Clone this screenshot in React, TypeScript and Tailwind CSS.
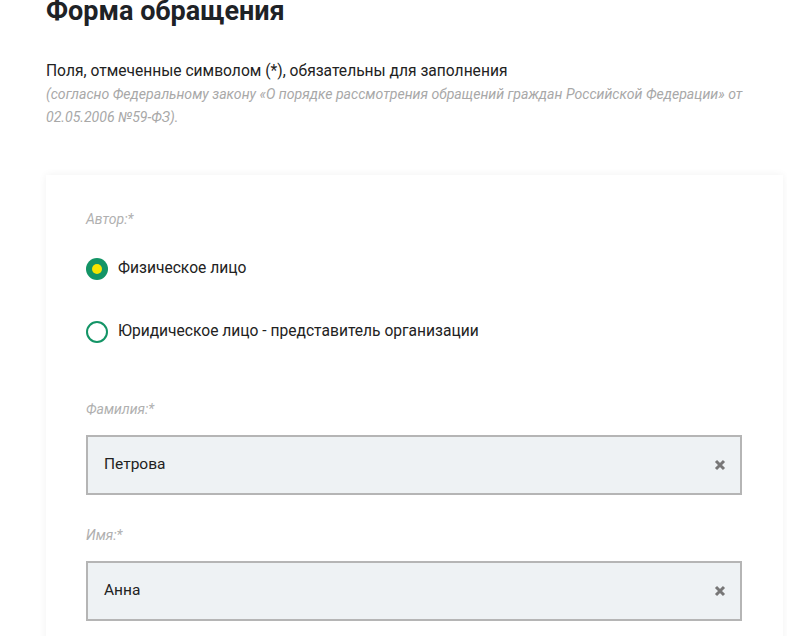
export default function App() {
  const field = (label: string, value: string) => (
    <div className="flex flex-col">
      <div className="text-[14px] italic text-[#b0b0b0] h-[20px] leading-[20px]">{label}</div>
      <div className="mt-[16px] h-[60px] border-2 border-[#b5b5b5] bg-[#eef2f4] flex items-center justify-between pl-[16px] pr-[14px]">
        <span className="text-[15.5px] text-[#222]">{value}</span>
        <svg width="12" height="12" viewBox="0 0 12 12"><path d="M2 2L10 10M10 2L2 10" stroke="#777" strokeWidth="3" /></svg>
      </div>
    </div>
  );
  return (
    <div className="w-[787px] h-[636px] overflow-hidden bg-white" style={{ fontFamily: "Roboto, 'Noto Sans', sans-serif" }}>
      <div className="pl-[46px] pr-[30px]">
        <h1 className="text-[27px] font-bold text-[#1e2226] leading-[32px] mt-[-5px]">Форма обращения</h1>
        <p className="mt-[32px] text-[15.6px] text-[#222] leading-[24px]">Поля, отмеченные символом (*), обязательны для заполнения</p>
        <p className="text-[14.1px] italic text-[#a8a8a8] leading-[23px]">(согласно Федеральному закону «О порядке рассмотрения обращений граждан Российской Федерации» от 02.05.2006 №59-ФЗ).</p>
      </div>
      <div className="ml-[46px] mr-[4px] mt-[46px] shadow-[0_0_8px_rgba(0,0,0,0.06)] pl-[40px] pr-[41px] pt-[34px] pb-[20px] h-[600px]">
        <div className="text-[14px] italic text-[#b0b0b0] h-[20px] leading-[20px]">Автор:*</div>
        <div className="mt-[28px] flex items-center gap-[10px]">
          <span className="w-[22px] h-[22px] rounded-full bg-[#139466] flex items-center justify-center"><span className="w-[10px] h-[10px] rounded-full bg-[#f5e400]" /></span>
          <span className="text-[15.6px] text-[#222]">Физическое лицо</span>
        </div>
        <div className="mt-[40px] flex items-center gap-[10px]">
          <span className="w-[22px] h-[22px] rounded-full border-2 border-[#139466]" />
          <span className="text-[15.6px] text-[#222]">Юридическое лицо - представитель организации</span>
        </div>
        <div className="mt-[55px] flex flex-col gap-[30px]">
          {field("Фамилия:*", "Петрова")}
          {field("Имя:*", "Анна")}
        </div>
      </div>
    </div>
  );
}
